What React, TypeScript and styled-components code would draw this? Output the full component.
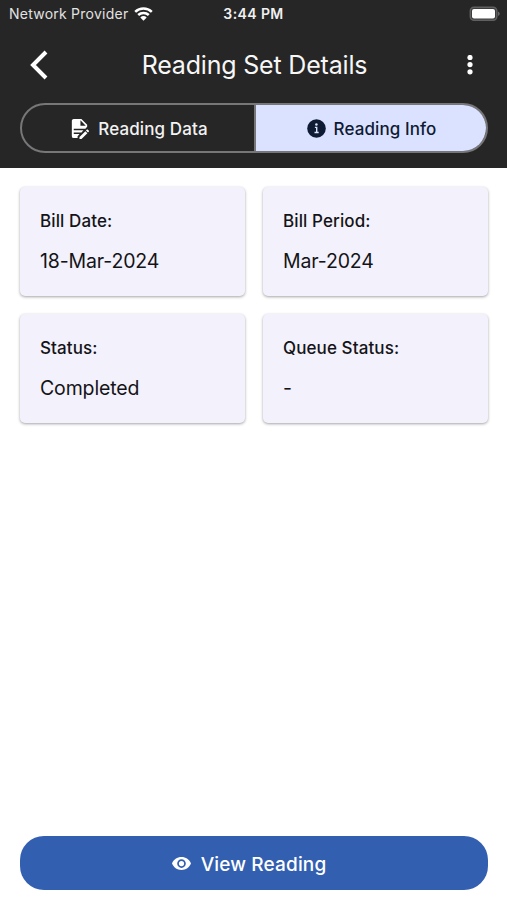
import React from "react";
import styled, { createGlobalStyle } from "styled-components";

const GlobalStyle = createGlobalStyle`
  * { box-sizing: border-box; }
  body { margin: 0; background: #fff; }
`;

const Screen = styled.div`
  display: flex;
  flex-direction: column;
  width: 507px;
  height: 900px;
  background: #fff;
  color: #141418;
  font-family: Inter, "Liberation Sans", sans-serif;
  white-space: nowrap;
  overflow: hidden;
`;

const Header = styled.header`
  height: 168px;
  background: #262626;
  color: #fff;
`;

const StatusBar = styled.div`
  display: grid;
  grid-template-columns: 1fr auto 1fr;
  align-items: center;
  height: 27px;
  padding: 0 7px 0 9px;
`;

const Carrier = styled.div`
  display: flex;
  align-items: center;
  gap: 6px;
  font-size: 14px;
  letter-spacing: 0.24px;
  color: #e2e2e2;
`;

const Clock = styled.div`
  margin-right: 2px;
  font-size: 14px;
  font-weight: 600;
  letter-spacing: 0.4px;
  color: #f0f0f0;
`;

const Battery = styled.div`
  display: flex;
  justify-content: flex-end;
`;

const TitleBar = styled.div`
  display: grid;
  grid-template-columns: 40px 1fr 40px;
  align-items: center;
  height: 76px;
  padding: 0 34px 0 29px;
`;

const Title = styled.h1`
  margin: 0 0 0 7px;
  text-align: center;
  font-size: 25px;
  font-weight: 400;
  letter-spacing: -0.18px;
  color: #f7f7f7;
`;

const IconButton = styled.button<{ $end?: boolean }>`
  display: flex;
  justify-content: ${(p) => (p.$end ? "flex-end" : "flex-start")};
  padding: 0;
  border: 0;
  background: none;
`;

const Tabs = styled.div`
  display: grid;
  grid-template-columns: 232px 1fr;
  height: 50px;
  margin: 0 19px 0 20px;
  border: 2px solid #77777a;
  border-radius: 25px;
  overflow: hidden;
`;

const Tab = styled.button<{ $active?: boolean }>`
  display: flex;
  align-items: center;
  justify-content: center;
  gap: 7px;
  padding: 1px 0 0;
  border: 0;
  border-left: ${(p) => (p.$active ? "2px solid #77777a" : "0")};
  background: ${(p) => (p.$active ? "#dbe2ff" : "transparent")};
  color: ${(p) => (p.$active ? "#0f1a33" : "#f2f2f2")};
  font: 500 17px Inter, sans-serif;
  letter-spacing: 0.1px;
`;

const Cards = styled.main`
  display: grid;
  grid-template-columns: 224.5px 224.5px;
  grid-auto-rows: 108.5px;
  gap: 18.5px;
  flex: 1;
  padding: 19px 0 0 20px;
`;

const Card = styled.section`
  padding: 23px 20px;
  border-radius: 5px;
  background: #f3f1fb;
  box-shadow: 0 1px 3px rgba(0, 0, 0, 0.36);
`;

const Label = styled.div`
  font-size: 17px;
  font-weight: 500;
  line-height: 22px;
  letter-spacing: 0.1px;
`;

const Value = styled.div`
  margin-top: 17px;
  font-size: 19.5px;
  line-height: 24px;
  letter-spacing: -0.14px;
`;

const ViewButton = styled.button`
  display: flex;
  align-items: center;
  justify-content: center;
  gap: 10px;
  height: 54px;
  margin: 0 19px 10px 20px;
  padding: 2px 10px 0 0;
  border: 0;
  border-radius: 24px;
  background: #335fb1;
  color: #fff;
  font: 500 19px Inter, sans-serif;
  letter-spacing: 0.15px;
`;

const WifiIcon = () => (
  <svg width="19" height="14" viewBox="0 0 19 14" fill="none" stroke="#fff" strokeWidth="2.5">
    <path d="M1.2 4.8a12 12 0 0 1 16.6 0" />
    <path d="M4.2 8a7.7 7.7 0 0 1 10.6 0" />
    <path d="M9.5 13.7 6.3 10.4a4.7 4.7 0 0 1 6.4 0Z" fill="#fff" stroke="none" />
  </svg>
);

const BatteryIcon = () => (
  <svg width="31" height="16" viewBox="0 0.8 31 16">
    <rect x="1.3" y="2" width="26.5" height="13" rx="3.7" fill="#3c3c3e" stroke="#606062" strokeWidth="1.5" />
    <rect x="3" y="3.9" width="23" height="9.3" rx="2" fill="#fff" />
    <path d="M29 6.200q1.800.7 1.800 2.300t-1.800 2.300Z" fill="#68686a" />
  </svg>
);

const BackIcon = () => (
  <svg width="20" height="30" viewBox="0 0 20 30" fill="none" stroke="#fff" strokeWidth="4">
    <path d="M17 2 4 15l13 13" />
  </svg>
);

const MoreIcon = () => (
  <svg width="6" height="20" viewBox="0 0 6 20" fill="#fff">
    <circle cx="3" cy="2.5" r="2.600" />
    <circle cx="3" cy="9.6" r="2.600" />
    <circle cx="3" cy="16.8" r="2.600" />
  </svg>
);

const FileEditIcon = () => (
  <svg width="23" height="23" viewBox="0 0 24 24" fill="#fff">
    <path d="M6 2C4.89 2 4 2.89 4 4V20A2 2 0 0 0 6 22H10V20.09L12.09 17.700H6V16.200H14.09L16.09 13.700H6V12.200H18.09L20 10.09V8L14 2H6M13 3.5L18.5 9H13V3.5M20.15 13C20 13 19.86 13.05 19.75 13.16L18.73 14.18L20.82 16.26L21.84 15.25C22.05 15.03 22.05 14.67 21.84 14.46L20.54 13.16C20.43 13.05 20.29 13 20.15 13M18.14 14.77L12 20.92V23H14.08L20.23 16.85L18.14 14.77Z" />
  </svg>
);

const InfoIcon = () => (
  <svg width="21" height="21" viewBox="0 0 21 21">
    <circle cx="10.5" cy="10.5" r="9.300" fill="#0f1a33" />
    <circle cx="10.4" cy="6.6" r="1.250" fill="#dbe2ff" />
    <path d="M8.900 9.400h1.800v5M8.500 14.500h4.200" fill="none" stroke="#dbe2ff" strokeWidth="1.400" />
  </svg>
);

const EyeIcon = () => (
  <svg width="19" height="20" viewBox="1 1 22 23" fill="#fff">
    <path d="M12 9a3 3 0 0 0-3 3 3 3 0 0 0 3 3 3 3 0 0 0 3-3 3 3 0 0 0-3-3m0 8a5 5 0 0 1-5-5 5 5 0 0 1 5-5 5 5 0 0 1 5 5 5 5 0 0 1-5 5m0-12.5C7 4.500 2.730 7.610 1 12c1.730 4.390 6 7.500 11 7.500s9.270-3.110 11-7.500c-1.730-4.390-6-7.500-11-7.500Z" />
  </svg>
);

const details = [
  ["Bill Date:", "18-Mar-2024"],
  ["Bill Period:", "Mar-2024"],
  ["Status:", "Completed"],
  ["Queue Status:", "-"],
];

export default function App() {
  return (
    <Screen>
      <GlobalStyle />
      <Header>
        <StatusBar>
          <Carrier>Network Provider <WifiIcon /></Carrier>
          <Clock>3:44 PM</Clock>
          <Battery><BatteryIcon /></Battery>
        </StatusBar>
        <TitleBar>
          <IconButton aria-label="Back"><BackIcon /></IconButton>
          <Title>Reading Set Details</Title>
          <IconButton $end aria-label="More options"><MoreIcon /></IconButton>
        </TitleBar>
        <Tabs>
          <Tab><FileEditIcon />Reading Data</Tab>
          <Tab $active><InfoIcon />Reading Info</Tab>
        </Tabs>
      </Header>
      <Cards>
        {details.map(([label, value]) => (
          <Card key={label}>
            <Label>{label}</Label>
            <Value>{value}</Value>
          </Card>
        ))}
      </Cards>
      <ViewButton><EyeIcon />View Reading</ViewButton>
    </Screen>
  );
}
